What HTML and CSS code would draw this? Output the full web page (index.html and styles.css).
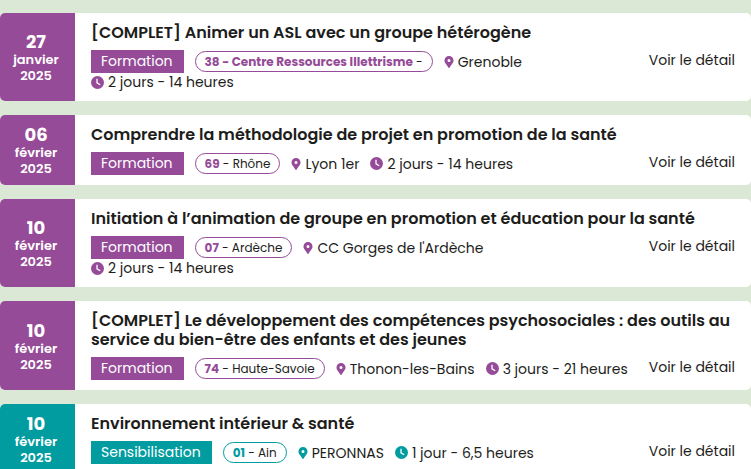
FILE: index.html
```html
<!DOCTYPE html>
<html lang="fr">
<head>
<meta charset="utf-8">
<meta name="viewport" content="width=device-width, initial-scale=1">
<title>Agenda des formations</title>
<link rel="stylesheet" href="styles.css">
</head>
<body>
<svg class="sprite" aria-hidden="true">
  <symbol id="pin" viewBox="0 0 384 512"><path fill="currentColor" d="M172 502C27 291 0 270 0 192a192 192 0 1 1 384 0c0 78-27 99-172 310a24 24 0 0 1-40 0zM192 256a64 64 0 1 0 0-128 64 64 0 0 0 0 128z"/></symbol>
  <symbol id="clock" viewBox="0 0 13 13"><circle cx="6.5" cy="6.5" r="6.5" fill="currentColor"/><path d="M6 2.8v4l3.2 2" fill="none" stroke="#fff" stroke-width="1.3"/></symbol>
</svg>
<main class="agenda">
  <article class="event">
    <time class="date" datetime="2025-01-27"><span class="day">27</span><span>janvier</span><span>2025</span></time>
    <div class="content">
      <h2 class="title">[COMPLET] Animer un ASL avec un groupe hétérogène</h2>
      <div class="details">
        <div class="meta">
          <span class="type">Formation</span>
          <span class="area"><b>38 - Centre Ressources Illettrisme</b> -</span>
          <span class="info"><svg class="pin"><use href="#pin"/></svg>Grenoble</span>
          <span class="info"><svg class="clock"><use href="#clock"/></svg>2 jours - 14 heures</span>
        </div>
        <a class="more" href="#">Voir le détail</a>
      </div>
    </div>
  </article>
  <article class="event">
    <time class="date" datetime="2025-02-06"><span class="day">06</span><span>février</span><span>2025</span></time>
    <div class="content">
      <h2 class="title">Comprendre la méthodologie de projet en promotion de la santé</h2>
      <div class="details">
        <div class="meta">
          <span class="type">Formation</span>
          <span class="area"><b>69</b> - Rhône</span>
          <span class="info"><svg class="pin"><use href="#pin"/></svg>Lyon 1er</span>
          <span class="info"><svg class="clock"><use href="#clock"/></svg>2 jours - 14 heures</span>
        </div>
        <a class="more" href="#">Voir le détail</a>
      </div>
    </div>
  </article>
  <article class="event">
    <time class="date" datetime="2025-02-10"><span class="day">10</span><span>février</span><span>2025</span></time>
    <div class="content">
      <h2 class="title">Initiation à l’animation de groupe en promotion et éducation pour la santé</h2>
      <div class="details">
        <div class="meta">
          <span class="type">Formation</span>
          <span class="area"><b>07</b> - Ardèche</span>
          <span class="info"><svg class="pin"><use href="#pin"/></svg>CC Gorges de l'Ardèche</span>
          <span class="info"><svg class="clock"><use href="#clock"/></svg>2 jours - 14 heures</span>
        </div>
        <a class="more" href="#">Voir le détail</a>
      </div>
    </div>
  </article>
  <article class="event">
    <time class="date" datetime="2025-02-10"><span class="day">10</span><span>février</span><span>2025</span></time>
    <div class="content">
      <h2 class="title">[COMPLET] Le développement des compétences psychosociales : des outils au service du bien-être des enfants et des jeunes</h2>
      <div class="details">
        <div class="meta">
          <span class="type">Formation</span>
          <span class="area"><b>74</b> - Haute-Savoie</span>
          <span class="info"><svg class="pin"><use href="#pin"/></svg>Thonon-les-Bains</span>
          <span class="info"><svg class="clock"><use href="#clock"/></svg>3 jours - 21 heures</span>
        </div>
        <a class="more" href="#">Voir le détail</a>
      </div>
    </div>
  </article>
  <article class="event awareness">
    <time class="date" datetime="2025-02-10"><span class="day">10</span><span>février</span><span>2025</span></time>
    <div class="content">
      <h2 class="title">Environnement intérieur &amp; santé</h2>
      <div class="details">
        <div class="meta">
          <span class="type">Sensibilisation</span>
          <span class="area"><b>01</b> - Ain</span>
          <span class="info"><svg class="pin"><use href="#pin"/></svg>PERONNAS</span>
          <span class="info"><svg class="clock"><use href="#clock"/></svg>1 jour - 6,5 heures</span>
        </div>
        <a class="more" href="#">Voir le détail</a>
      </div>
    </div>
  </article>
</main>
</body>
</html>
```
FILE: styles.css
```css
* { box-sizing: border-box; }

html { overflow: hidden; }

body {
  margin: 0;
  background: #dce8d6;
  color: #1d1d1b;
  font: 14px/18px Poppins, Inter, sans-serif;
}

.sprite { position: absolute; width: 0; height: 0; }

.agenda {
  display: flex;
  flex-direction: column;
  gap: 14px;
  padding-top: 13px;
}

.event {
  --accent: #954b97;
  display: flex;
  overflow: hidden;
  border-radius: 5px;
  background: #fff;
}

.awareness { --accent: #009c9f; }

.date {
  display: flex;
  flex: none;
  flex-direction: column;
  align-items: center;
  justify-content: center;
  width: 75px;
  padding: 2px 3px 0 0;
  background: var(--accent);
  color: #fff;
  font-size: 13px;
  font-weight: 600;
  line-height: 16px;
}

.day { font-size: 18px; font-weight: 700; line-height: 20px; }

.content {
  flex: 1;
  min-width: 0;
  padding: 10px 16px;
}

.title {
  margin: 0 0 8px;
  font-size: 16px;
  font-weight: 600;
  line-height: 19px;
}

.details {
  display: flex;
  align-items: flex-start;
  justify-content: space-between;
  gap: 16px;
}

.meta {
  display: flex;
  flex-wrap: wrap;
  align-items: center;
  column-gap: 11px;
  min-width: 0;
}

.type {
  padding: 0 11px 0 10px;
  background: var(--accent);
  color: #fff;
  line-height: 23px;
}

.area {
  padding: 0 9px;
  border: 1px solid var(--accent);
  border-radius: 11px;
  font-size: 12px;
  line-height: 19px;
}

.area b { color: var(--accent); }

.info {
  display: flex;
  align-items: center;
  gap: 4px;
}

.pin { width: 10px; height: 12px; color: var(--accent); }

.clock { width: 13px; height: 13px; color: var(--accent); }

.more {
  flex: none;
  color: inherit;
  line-height: 21px;
  text-decoration: none;
}
```
